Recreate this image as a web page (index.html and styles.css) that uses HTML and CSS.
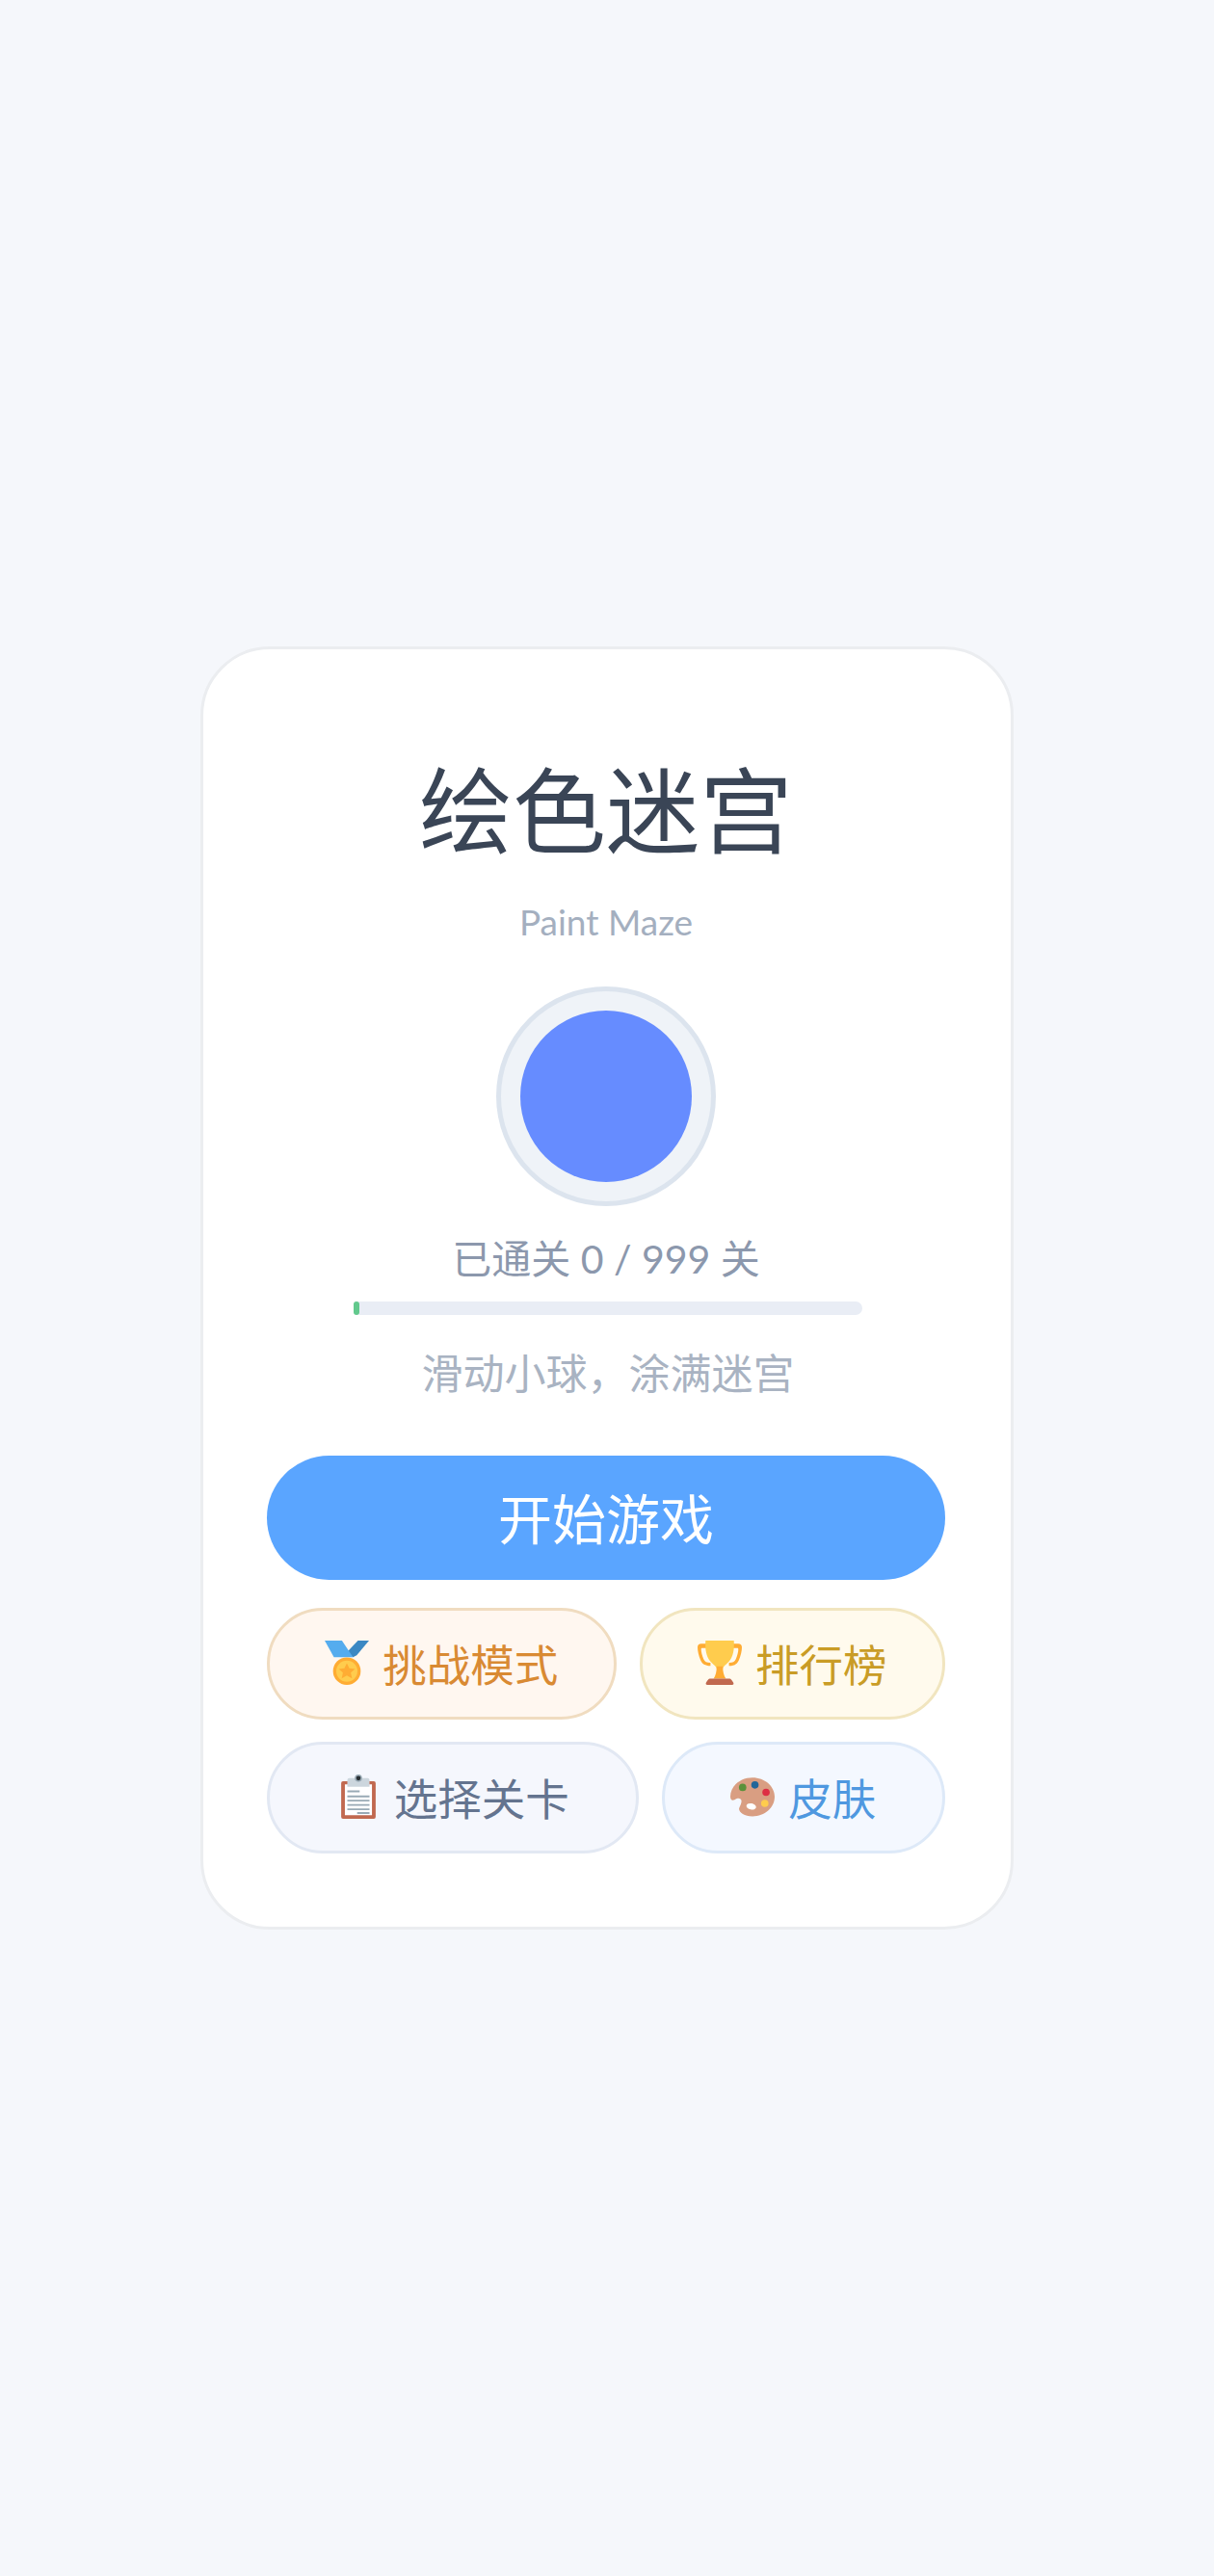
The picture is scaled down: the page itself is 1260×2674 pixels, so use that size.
FILE: index.html
```html
<!DOCTYPE html>
<html lang="zh-CN">
<head>
    <meta charset="UTF-8">
    <meta name="viewport" content="width=device-width, initial-scale=1.0">
    <title>绘色迷宫</title>
    <link rel="stylesheet" href="styles.css">
</head>
<body>
    <div class="card">
        <h1 class="title">绘色迷宫</h1>
        <div class="subtitle">Paint Maze</div>
        <div class="ball-ring"><div class="ball"></div></div>
        <div class="progress-text">已通关 0 / 999 关</div>
        <div class="progress-bar"><div class="progress-fill"></div></div>
        <div class="hint">滑动小球，涂满迷宫</div>

        <button class="btn-start">开始游戏</button>

        <div class="btn-row">
            <button class="btn btn-challenge">
                <svg class="icon" viewBox="0 0 36 36">
                    <path fill="#3b88c3" d="M36 0h-9l-8.500 9 4.500 4.500 3-1.500z"/>
                    <path fill="#55acee" d="M0 0h14l9 13.500H7.500z"/>
                    <circle fill="#ffac33" cx="18" cy="24.800" r="11.200"/>
                    <circle fill="#ffcc4d" cx="18" cy="24.800" r="8.600"/>
                    <path fill="#ffac33" d="m18 18.300 2 4.200 4.600.5-3.400 3.100 1 4.600-4.200-2.400-4.200 2.400 1-4.600-3.400-3.100 4.600-.5z"/>
                </svg>
                挑战模式
            </button>
            <button class="btn btn-rank">
                <svg class="icon" viewBox="0 0 36 36">
                    <path fill="#ffac33" d="M3 2.500h30c2 0 3 1 3 3 0 3-1 7-2.500 10.500-1.300 2.800-3.500 4.500-8 4.500V18c3 0 4.700-1 5.600-3 1.200-2.800 2-6 2-8 0-.7-.3-1-.8-1H3.700c-.5 0-.8.300-.8 1 0 2 .8 5.200 2 8 .9 2 2.600 3 5.600 3v2.500c-4.500 0-6.700-1.700-8-4.500C1 12.500 0 8.500 0 5.500c0-2 1-3 3-3z"/>
                    <path fill="#ffcc4d" d="M6.500 0h23c.5 7-.5 13-4 17-2.800 3-5 4-5 6h-5c0-2-2.200-3-5-6-3.500-4-4.500-10-4-17z"/>
                    <path fill="#ffac33" d="M15.500 21h5c0 4.500.8 7.500 2.500 10H13c1.700-2.500 2.500-5.500 2.500-10z"/>
                    <path fill="#c1694f" d="M10 31h16c1 0 2 1.500 3 3 .6 1 .3 2-1 2H8c-1.300 0-1.600-1-1-2 1-1.500 2-3 3-3z"/>
                </svg>
                排行榜
            </button>
        </div>
        <div class="btn-row">
            <button class="btn btn-levels">
                <svg class="icon" viewBox="0 0 36 36">
                    <path fill="#c1694f" d="M5.500 5.500h25A1.500 1.500 0 0 1 32 7v27.500a1.500 1.500 0 0 1-1.500 1.500h-25A1.500 1.500 0 0 1 4 34.500V7a1.500 1.500 0 0 1 1.500-1.500z"/>
                    <path fill="#fff" d="M7 8h22v25H7z"/>
                    <path fill="#ccd6dd" d="M10.500 3h15A1.500 1.500 0 0 1 27 4.500V10H9V4.500A1.500 1.500 0 0 1 10.500 3z"/>
                    <circle fill="#99aab5" cx="18" cy="3" r="3"/>
                    <circle fill="#292f33" cx="18" cy="3" r="1.800"/>
                    <path fill="#99aab5" d="M9 13h10v1.500H9zM9 17h18v1.500H9zM9 20.500h18V22H9zM9 24h18v1.500H9zM9 27.500h18V29H9zM17 30.500h10V32H17z"/>
                </svg>
                选择关卡
            </button>
            <button class="btn btn-skin">
                <svg class="icon" viewBox="0 0 36 36">
                    <path fill="#d99e82" d="M18 2.500C8 2.500 0 9.500 0 18c0 2.500 1.500 3.500 3.500 2.500 2-1 3.500-1.500 4.800-.5 1.700 1.300.2 4.500-1 7-1.300 3 3.500 7 10.700 7C28 34 36 27 36 18 36 9.500 28 2.500 18 2.500z"/>
                    <circle fill="#5c913b" cx="10" cy="10.500" r="3"/>
                    <circle fill="#226699" cx="20" cy="8.500" r="3"/>
                    <circle fill="#dd2e44" cx="29" cy="14.500" r="3"/>
                    <circle fill="#ffcc4d" cx="28" cy="23.500" r="3"/>
                    <ellipse fill="#fff" cx="17" cy="26" rx="4" ry="2.500" transform="rotate(12 17 26)"/>
                </svg>
                皮肤
            </button>
        </div>
    </div>
</body>
</html>
```
FILE: styles.css
```css
* {
    box-sizing: border-box;
}

body {
    margin: 0;
    min-height: 2674px;
    display: flex;
    align-items: center;
    justify-content: center;
    background: #f5f7fb;
    font-family: Lato, "Noto Sans CJK SC", sans-serif;
}

.card {
    width: 844px;
    padding: 97px 68px 76px 66px;
    display: flex;
    flex-direction: column;
    align-items: center;
    background: #fff;
    border: 3px solid #ebedf0;
    border-radius: 72px;
}

.title {
    margin: 0;
    font-size: 97px;
    font-weight: 400;
    line-height: 139px;
    color: #3a4556;
}

.subtitle {
    margin-top: 21px;
    font-size: 37px;
    line-height: 52px;
    color: #a4afbf;
}

.ball-ring {
    width: 228px;
    height: 228px;
    margin-top: 41px;
    display: flex;
    align-items: center;
    justify-content: center;
    background: #eff3f8;
    border: 5px solid #dce4ee;
    border-radius: 50%;
}

.ball {
    width: 178px;
    height: 178px;
    background: #668cff;
    border-radius: 50%;
}

.progress-text {
    margin-top: 27px;
    font-size: 41px;
    line-height: 56px;
    color: #8c98ad;
}

.progress-bar {
    width: 528px;
    height: 14px;
    margin-top: 16px;
    margin-left: 3px;
    background: #e9edf5;
    border-radius: 7px;
}

.progress-fill {
    width: 6px;
    height: 14px;
    background: #62c98d;
    border-radius: 3px;
}

.hint {
    margin-top: 30px;
    padding-left: 4px;
    font-size: 43px;
    line-height: 62px;
    color: #a9b3c2;
}

.btn-start {
    width: 100%;
    height: 129px;
    margin-top: 54px;
    padding-bottom: 6px;
    font-family: inherit;
    font-size: 56px;
    color: #fff;
    background: #5aa5ff;
    border: none;
    border-radius: 65px;
}

.btn-row {
    width: 100%;
    margin-top: 23px;
    display: flex;
    gap: 24px;
}

.btn-start + .btn-row {
    margin-top: 29px;
}

.btn {
    flex: 1 1 auto;
    height: 116px;
    padding: 0 30px 2px;
    display: flex;
    align-items: center;
    justify-content: center;
    gap: 14px;
    font-family: inherit;
    font-size: 45.5px;
    border: 3px solid;
    border-radius: 58px;
}

.icon {
    width: 46px;
    height: 46px;
}

.btn-challenge {
    color: #d98a33;
    background: #fff7f0;
    border-color: #f0dcc0;
}

.btn-rank {
    color: #c99c26;
    background: #fffaed;
    border-color: #f1e5bf;
}

.btn-levels {
    color: #64748f;
    background: #f5f7fd;
    border-color: #e2e8f3;
}

.btn-skin {
    color: #4f98e0;
    background: #f4f8ff;
    border-color: #dde9f8;
}
```
